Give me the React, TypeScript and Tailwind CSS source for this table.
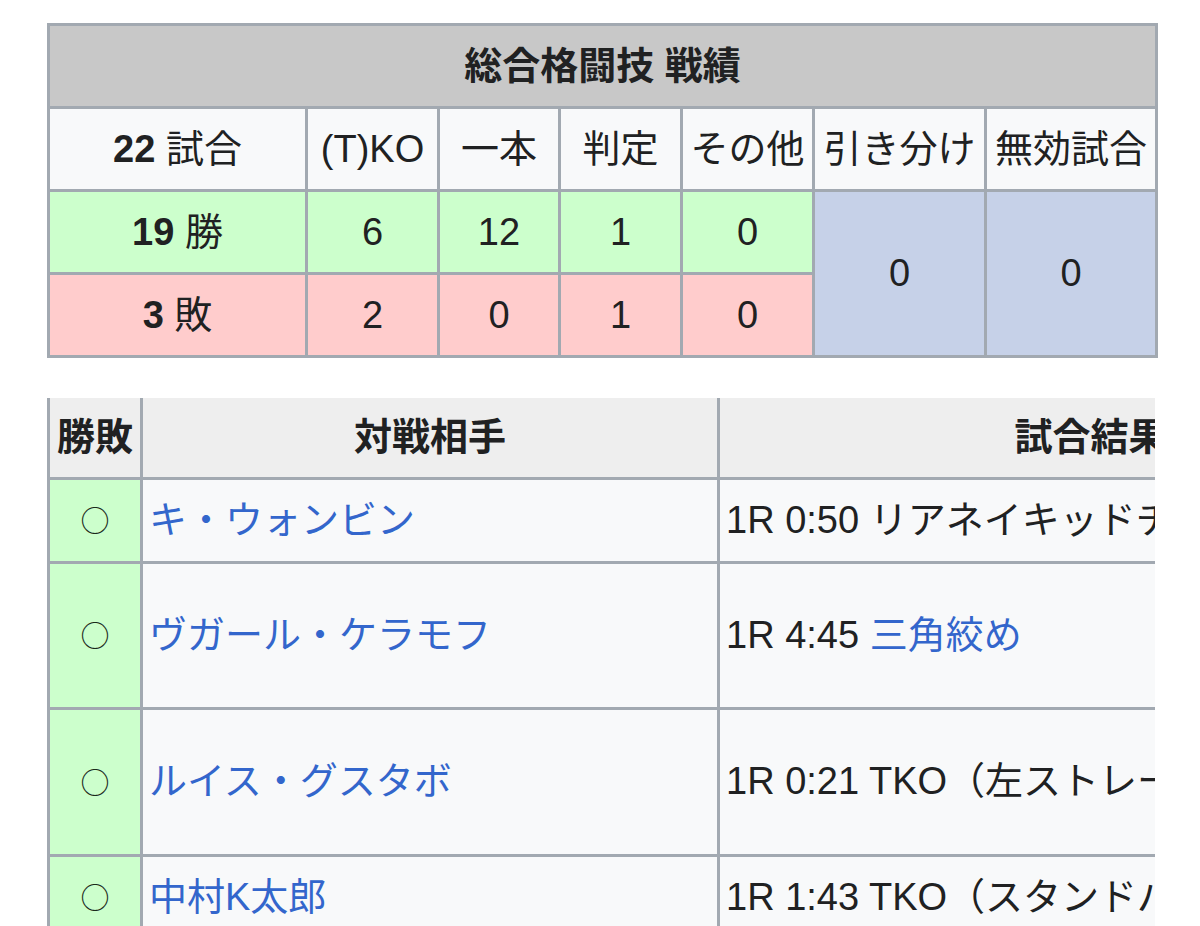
import React from 'react';

// Wikipedia-style MMA record tables (mobile screenshot, ~3x scale)

interface Fight {
  name: string;
  time: string;
  method: string;
  methodLink?: boolean;
  rowH: string;
}

const fights: Fight[] = [
  { name: 'キ・ウォンビン', time: '1R 0:50', method: 'リアネイキッドチョーク', rowH: 'h-[84px]' },
  { name: 'ヴガール・ケラモフ', time: '1R 4:45', method: '三角絞め', methodLink: true, rowH: 'h-[146px]' },
  { name: 'ルイス・グスタボ', time: '1R 0:21', method: 'TKO（左ストレート）', rowH: 'h-[147px]' },
  { name: '中村K太郎', time: '1R 1:43', method: 'TKO（スタンドパンチ）', rowH: 'h-[84px]' },
];

const cell = 'border-[3px] border-[#a2a9b1] px-1 text-center align-middle';
const rowCell = 'border-[3px] border-[#a2a9b1] px-[6px] align-middle whitespace-nowrap';

const App: React.FC = () => {
  return (
    <div className="min-h-screen bg-white pt-[23px] pl-[47px] font-['Liberation_Sans','Noto_Sans_CJK_JP',sans-serif] text-[38px] leading-normal text-[#202122]">
      {/* Summary table */}
      <table className="w-[1108px] table-fixed border-collapse">
        <colgroup>
          <col className="w-[258px]" />
          <col className="w-[132px]" />
          <col className="w-[121px]" />
          <col className="w-[122px]" />
          <col className="w-[132px]" />
          <col className="w-[172px]" />
          <col className="w-[171px]" />
        </colgroup>
        <tbody>
          <tr className="h-[83px]">
            <th colSpan={7} className={`${cell} bg-[#c8c8c8] font-bold`}>
              総合格闘技 戦績
            </th>
          </tr>
          <tr className="h-[83px] bg-[#f8f9fa]">
            <td className={cell}>
              <b>22</b> 試合
            </td>
            <td className={cell}>(T)KO</td>
            <td className={cell}>一本</td>
            <td className={cell}>判定</td>
            <td className={`${cell} whitespace-nowrap`}>その他</td>
            <td className={`${cell} whitespace-nowrap`}>引き分け</td>
            <td className={`${cell} whitespace-nowrap`}>無効試合</td>
          </tr>
          <tr className="h-[83px] bg-[#ccffcc]">
            <td className={cell}>
              <b>19</b> 勝
            </td>
            <td className={cell}>6</td>
            <td className={cell}>12</td>
            <td className={cell}>1</td>
            <td className={cell}>0</td>
            <td rowSpan={2} className={`${cell} bg-[#c6d1e8]`}>
              0
            </td>
            <td rowSpan={2} className={`${cell} bg-[#c6d1e8]`}>
              0
            </td>
          </tr>
          <tr className="h-[83px] bg-[#ffcccc]">
            <td className={cell}>
              <b>3</b> 敗
            </td>
            <td className={cell}>2</td>
            <td className={cell}>0</td>
            <td className={cell}>1</td>
            <td className={cell}>0</td>
          </tr>
        </tbody>
      </table>

      {/* Fight list, wider than the screen and cut off on the right */}
      <div className="mt-[40px] w-[1108px] overflow-hidden">
        <table className="w-[1420px] table-fixed border-collapse">
          <colgroup>
            <col className="w-[93px]" />
            <col className="w-[577px]" />
            <col className="w-[750px]" />
          </colgroup>
          <thead>
            <tr className="h-[80px] bg-[#eeeeee]">
              <th className="border-[3px] border-t-0 border-[#a2a9b1] text-center font-bold whitespace-nowrap">勝敗</th>
              <th className="border-[3px] border-t-0 border-[#a2a9b1] text-center font-bold">対戦相手</th>
              <th className="border-[3px] border-t-0 border-[#a2a9b1] pr-[6px] text-center font-bold">試合結果</th>
            </tr>
          </thead>
          <tbody>
            {fights.map((f, i) => (
              <tr key={i} className={`${f.rowH} bg-[#f8f9fa]`}>
                <td className="border-[3px] border-[#a2a9b1] bg-[#ccffcc] text-center align-middle font-['Noto_Sans_CJK_JP',sans-serif] text-[29px] text-[#1a2a1a]">
                  ○
                </td>
                <td className={`${rowCell} text-[#3366cc]`}>{f.name}</td>
                <td className={rowCell}>
                  {f.time}{' '}
                  {f.methodLink ? <span className="text-[#3366cc]">{f.method}</span> : f.method}
                </td>
              </tr>
            ))}
          </tbody>
        </table>
      </div>
    </div>
  );
};

export default App;
